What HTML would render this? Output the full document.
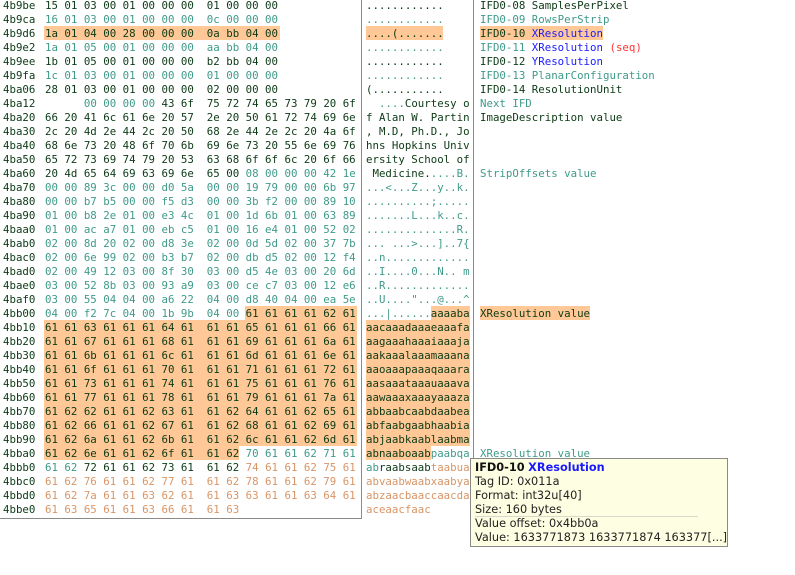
<!DOCTYPE html>
<html><head><meta charset="utf-8">
<style>
html,body{margin:0;padding:0;background:#fff;width:795px;height:575px;overflow:hidden;position:relative}
pre{position:absolute;margin:0;font-family:"DejaVu Sans Mono","Liberation Mono",monospace;font-size:10.75px;line-height:14px;color:#0c3a16;top:-1px;white-space:pre}
.L{color:#3f9a8a}.O{color:#d89566}.D{color:#0c3a16}.B{color:#1a1aff}.R{color:#ff3333}
.hl{position:absolute;background:#ffc896}
.ln{position:absolute;background:#8a8a8a}
#tip{position:absolute;left:470px;top:458px;width:258px;height:89px;background:#fefee2;border:1px solid #8a8a8a;font-family:"DejaVu Sans","Liberation Sans",sans-serif;font-size:11.3px;line-height:14px;color:#222;padding:2px 0 0 4px;box-sizing:border-box;white-space:nowrap}
</style></head><body>
<div class="hl" style="left:44px;top:26px;width:236px;height:14px"></div>
<div class="hl" style="left:366px;top:26px;width:77px;height:14px"></div>
<div class="hl" style="left:480px;top:26px;width:123px;height:14px"></div>
<div class="hl" style="left:245px;top:306px;width:112px;height:14px"></div>
<div class="hl" style="left:44px;top:320px;width:313px;height:126px"></div>
<div class="hl" style="left:44px;top:446px;width:195px;height:14px"></div>
<div class="hl" style="left:431px;top:306px;width:39px;height:14px"></div>
<div class="hl" style="left:366px;top:320px;width:104px;height:126px"></div>
<div class="hl" style="left:366px;top:446px;width:65px;height:14px"></div>
<div class="hl" style="left:480px;top:306px;width:110px;height:14px"></div>
<div class="ln" style="left:361px;top:0;width:1px;height:519px"></div>
<div class="ln" style="left:473px;top:0;width:1px;height:519px"></div>
<div class="ln" style="left:0;top:518px;width:362px;height:1px"></div>
<pre style="left:3px">4b9be
4b9ca
4b9d6
4b9e2
4b9ee
4b9fa
4ba06
4ba12
4ba20
4ba30
4ba40
4ba50
4ba60
4ba70
4ba80
4ba90
4baa0
4bab0
4bac0
4bad0
4bae0
4baf0
4bb00
4bb10
4bb20
4bb30
4bb40
4bb50
4bb60
4bb70
4bb80
4bb90
4bba0
4bbb0
4bbc0
4bbd0
4bbe0</pre>
<pre style="left:45px"><span class="D">15 01 03 00 01 00 00 00  01 00 00 00</span>
<span class="L">16 01 03 00 01 00 00 00  0c 00 00 00</span>
<span class="D">1a 01 04 00 28 00 00 00  0a bb 04 00</span>
<span class="L">1a 01 05 00 01 00 00 00  aa bb 04 00</span>
<span class="D">1b 01 05 00 01 00 00 00  b2 bb 04 00</span>
<span class="L">1c 01 03 00 01 00 00 00  01 00 00 00</span>
<span class="D">28 01 03 00 01 00 00 00  02 00 00 00</span>
      <span class="L">00 00 00 00</span> 43 6f  75 72 74 65 73 79 20 6f
66 20 41 6c 61 6e 20 57  2e 20 50 61 72 74 69 6e
2c 20 4d 2e 44 2c 20 50  68 2e 44 2e 2c 20 4a 6f
68 6e 73 20 48 6f 70 6b  69 6e 73 20 55 6e 69 76
65 72 73 69 74 79 20 53  63 68 6f 6f 6c 20 6f 66
20 4d 65 64 69 63 69 6e  65 00 <span class="L">08 00 00 00 42 1e</span>
<span class="L">00 00 89 3c 00 00 d0 5a  00 00 19 79 00 00 6b 97
00 00 b7 b5 00 00 f5 d3  00 00 3b f2 00 00 89 10
01 00 b8 2e 01 00 e3 4c  01 00 1d 6b 01 00 63 89
01 00 ac a7 01 00 eb c5  01 00 16 e4 01 00 52 02
02 00 8d 20 02 00 d8 3e  02 00 0d 5d 02 00 37 7b
02 00 6e 99 02 00 b3 b7  02 00 db d5 02 00 12 f4
02 00 49 12 03 00 8f 30  03 00 d5 4e 03 00 20 6d
03 00 52 8b 03 00 93 a9  03 00 ce c7 03 00 12 e6
03 00 55 04 04 00 a6 22  04 00 d8 40 04 00 ea 5e
04 00 f2 7c 04 00 1b 9b  04 00 </span>61 61 61 61 62 61
61 61 63 61 61 61 64 61  61 61 65 61 61 61 66 61
61 61 67 61 61 61 68 61  61 61 69 61 61 61 6a 61
61 61 6b 61 61 61 6c 61  61 61 6d 61 61 61 6e 61
61 61 6f 61 61 61 70 61  61 61 71 61 61 61 72 61
61 61 73 61 61 61 74 61  61 61 75 61 61 61 76 61
61 61 77 61 61 61 78 61  61 61 79 61 61 61 7a 61
61 62 62 61 61 62 63 61  61 62 64 61 61 62 65 61
61 62 66 61 61 62 67 61  61 62 68 61 61 62 69 61
61 62 6a 61 61 62 6b 61  61 62 6c 61 61 62 6d 61
61 62 6e 61 61 62 6f 61  61 62 <span class="L">70 61 61 62 71 61</span>
<span class="L">61 62</span> 72 61 61 62 73 61  61 62 <span class="O">74 61 61 62 75 61</span>
<span class="O">61 62 76 61 61 62 77 61  61 62 78 61 61 62 79 61
61 62 7a 61 61 63 62 61  61 63 63 61 61 63 64 61
61 63 65 61 61 63 66 61  61 63</span></pre>
<pre style="left:366px"><span class="D">............</span>
<span class="L">............</span>
<span class="D">....(.......</span>
<span class="L">............</span>
<span class="D">............</span>
<span class="L">............</span>
<span class="D">(...........</span>
  <span class="L">....</span>Courtesy o
f Alan W. Partin
, M.D, Ph.D., Jo
hns Hopkins Univ
ersity School of
 Medicine.<span class="L">....B.</span>
<span class="L">...&lt;...Z...y..k.
..........;.....
.......L...k..c.
..............R.
... ...&gt;...]..7{
..n.............
..I....0...N.. m
..R.............
..U...."...@...^
...|......</span>aaaaba
aacaaadaaaeaaafa
aagaaahaaaiaaaja
aakaaalaaamaaana
aaoaaapaaaqaaara
aasaaataaauaaava
aawaaaxaaayaaaza
abbaabcaabdaabea
abfaabgaabhaabia
abjaabkaablaabma
abnaaboaab<span class="L">paabqa</span>
<span class="L">ab</span>raabsaab<span class="O">taabua</span>
<span class="O">abvaabwaabxaabya
abzaacbaaccaacda
aceaacfaac</span></pre>
<pre style="left:480px">IFD0-08 SamplesPerPixel
<span class="L">IFD0-09 RowsPerStrip</span>
IFD0-10 <span class="B">XResolution</span>
<span class="L">IFD0-11 </span><span class="B">XResolution</span> <span class="R">(seq)</span>
IFD0-12 <span class="B">YResolution</span>
<span class="L">IFD0-13 PlanarConfiguration</span>
IFD0-14 ResolutionUnit
<span class="L">Next IFD</span>
ImageDescription value



<span class="L">StripOffsets value</span>









XResolution value









<span class="L">XResolution value</span></pre>
<div id="tip">
<div><b style="color:#111">IFD0-10</b> <b style="color:#1a1aff">XResolution</b></div>
<div>Tag ID: 0x011a</div>
<div>Format: int32u[40]</div>
<div style="border-bottom:1px solid #d8d8c8;width:223px;height:13px">Size: 160 bytes</div>
<div>Value offset: 0x4bb0a</div>
<div>Value: 1633771873 1633771874 163377[...]</div>
</div>
</body></html>
